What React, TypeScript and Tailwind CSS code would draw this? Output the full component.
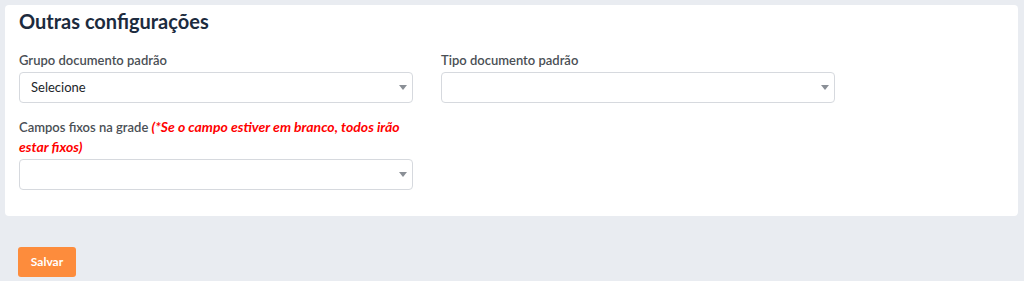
function Caret() {
  return (
    <svg width="8" height="5" viewBox="0 0 8 5" className="shrink-0">
      <path d="M0 0 L8 0 L4 5 Z" fill="#8a8f96" />
    </svg>
  );
}

function SelectBox({ value }: { value?: string }) {
  return (
    <div className="flex h-[31px] items-center justify-between rounded-[4px] border border-[#d6d9de] bg-white pl-[11px] pr-[5px] text-[13px] text-[#212529]">
      <span>{value ?? ""}</span>
      <Caret />
    </div>
  );
}

export default function App() {
  return (
    <div
      className="min-h-[281px] bg-[#e9ecf1] px-[5px] pt-[5px]"
      style={{ fontFamily: "Lato, 'Noto Sans', sans-serif" }}
    >
      {/* Card */}
      <div className="h-[211px] w-[1013px] rounded-[4px] bg-white px-[14px] pt-[1px]">
        <h2 className="text-[20px] font-bold leading-[30px] text-[#1c2b3e]">
          Outras configurações
        </h2>

        <div className="mt-[14px] grid grid-cols-[394px_394px] gap-x-[28px]">
          <div>
            <label className="block text-[13px] font-semibold leading-[20px] text-[#4a4f55]">
              Grupo documento padrão
            </label>
            <div className="mt-[2px]">
              <SelectBox value="Selecione" />
            </div>
          </div>
          <div>
            <label className="block text-[13px] font-semibold leading-[20px] text-[#4a4f55]">
              Tipo documento padrão
            </label>
            <div className="mt-[2px]">
              <SelectBox />
            </div>
          </div>

          <div className="mt-[14px]">
            <label className="block text-[13px] font-semibold leading-[20px] text-[#4a4f55]">
              Campos fixos na grade{" "}
              <span className="text-[14px] leading-[20px] italic font-bold text-[#ff0000]">
                (*Se o campo estiver em branco, todos irão estar fixos)
              </span>
            </label>
            <div className="mt-[2px]">
              <SelectBox />
            </div>
          </div>
        </div>
      </div>

      <button className="mt-[31px] ml-[13px] h-[30px] w-[58px] rounded-[3px] bg-[#fd8c3c] text-[12px] font-bold text-white">
        Salvar
      </button>
    </div>
  );
}
